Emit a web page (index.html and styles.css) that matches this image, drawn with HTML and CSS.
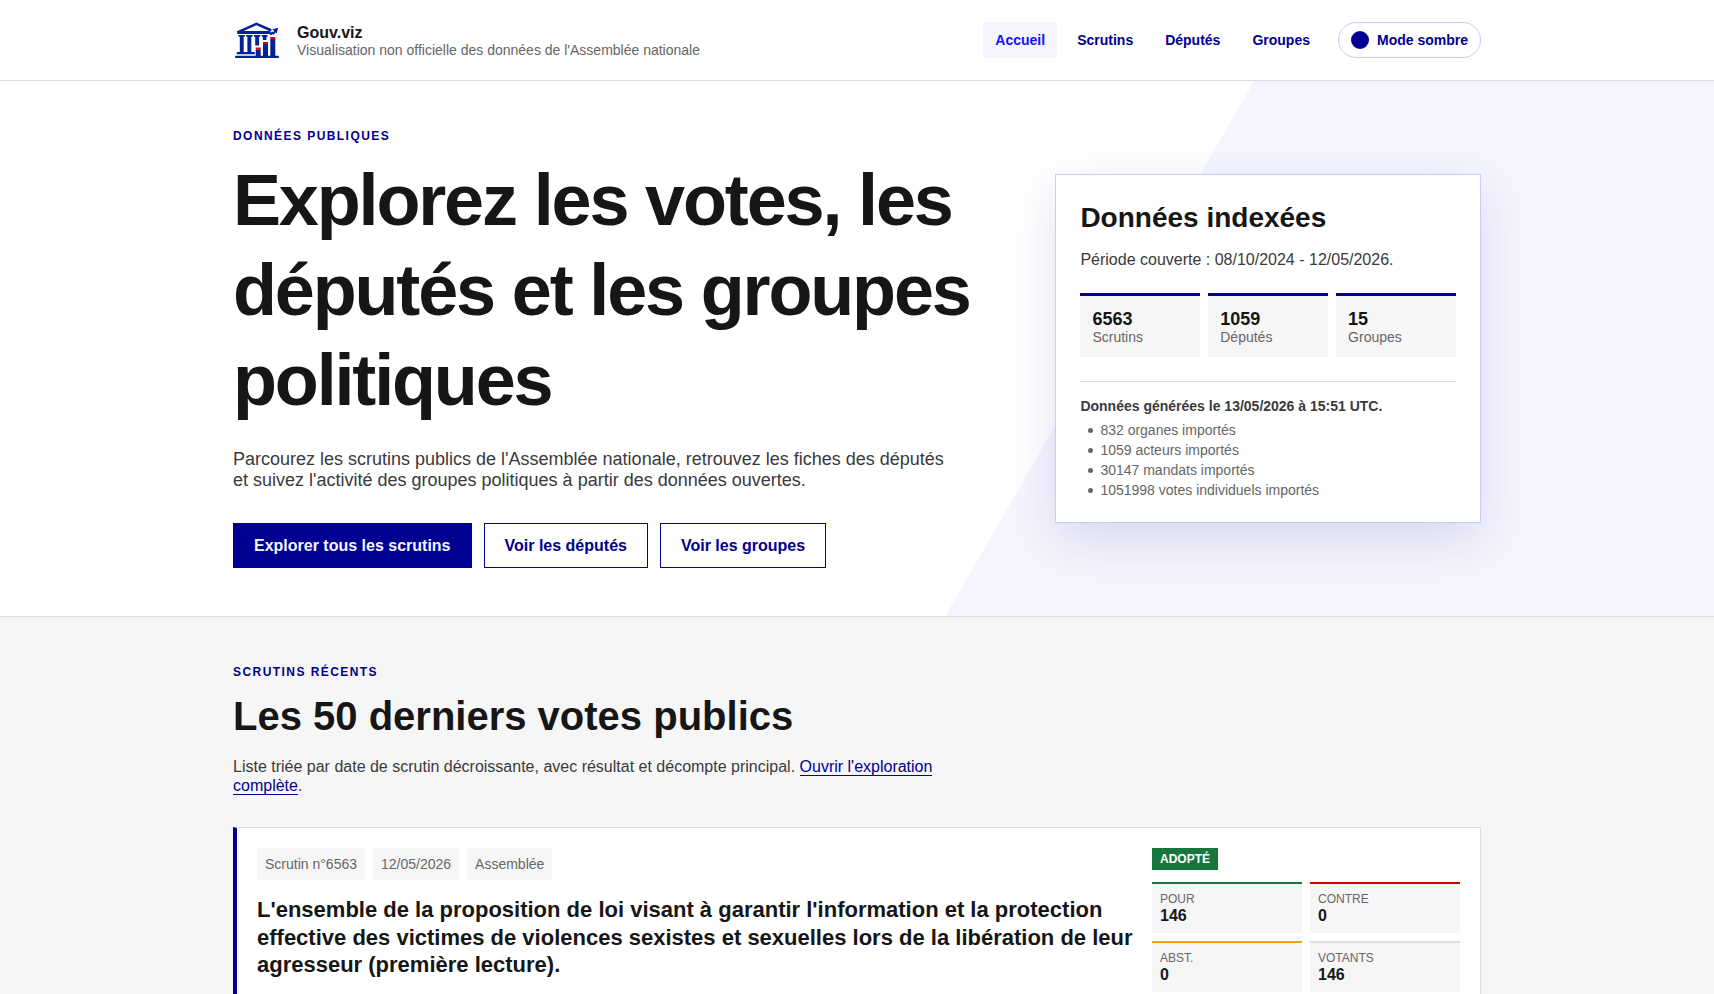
FILE: index.html
```html
<!DOCTYPE html>
<html lang="fr">
<head>
  <meta charset="UTF-8">
  <meta name="viewport" content="width=device-width, initial-scale=1.0">
  <title>Gouv.viz</title>
  <link rel="stylesheet" href="styles.css">
</head>
<body>
<header class="site-header">
  <div class="container header-inner">
    <a class="brand" href="#">
      <svg class="brand-logo" viewBox="0 0 48 48" aria-hidden="true">
        <!-- fronton -->
        <path d="M5.500 15.800L23.500 7.800l13.800 6.200" fill="none" stroke="#002395" stroke-width="2.500" stroke-linejoin="round" stroke-linecap="round"/>
        <path d="M4.300 15h31.700l2.400 1-1.800 2H4.300z" fill="#002395"/>
        <!-- colonnes -->
        <path d="M5.500 19h6.300v1.800h-1.100V36H6.800V20.800H5.500zM13.200 19h6.300v1.800h-1.200V36h-3.900V20.800h-1.200zM21 19h6.300v1.800h-1.200v8.800h-3.900v-8.800H21zM28.800 19h5.700v1.800h-1.100V24h-3.500v-3.200h-1.100zM3.800 36h18v2.200h-18z" fill="#002395"/>
        <!-- graphique -->
        <path d="M22.700 33.500h5V41h-5zM30 28h5v13h-5zM37.300 23h5v18h-5z" fill="#002395"/>
        <rect x="2" y="39.800" width="44" height="2.200" rx="1" fill="#002395"/>
        <path d="M22.700 31.600h5v2.200h-5zM30 26h5v2.200h-5zM37.300 21h5v2.200h-5z" fill="#e1000f"/>
        <path d="M37.200 18.800l2.200-2 1 .6 2.600-3" fill="none" stroke="#002395" stroke-width="2"/>
        <path d="M45 11.700l-1.300 5.800-4.200-4.200z" fill="#002395"/>
      </svg>
      <span class="brand-text">
        <strong class="brand-name">Gouv.viz</strong>
        <span class="brand-tagline">Visualisation non officielle des données de l'Assemblée nationale</span>
      </span>
    </a>
    <div class="header-actions">
      <nav class="main-nav" aria-label="Navigation principale">
        <a class="nav-link active" href="#" aria-current="page">Accueil</a>
        <a class="nav-link" href="#scrutins">Scrutins</a>
        <a class="nav-link" href="#deputes">Députés</a>
        <a class="nav-link" href="#groupes">Groupes</a>
      </nav>
      <button class="theme-toggle" type="button"><span class="theme-dot"></span>Mode sombre</button>
    </div>
  </div>
</header>

<main>
  <section class="hero">
    <div class="container hero-grid">
      <div class="hero-content">
        <p class="eyebrow">Données publiques</p>
        <h1>Explorez les votes, les députés et les groupes politiques</h1>
        <p class="hero-lead">Parcourez les scrutins publics de l'Assemblée nationale, retrouvez les fiches des députés et suivez l'activité des groupes politiques à partir des données ouvertes.</p>
        <div class="hero-buttons">
          <a class="btn btn-primary" href="#scrutins">Explorer tous les scrutins</a>
          <a class="btn" href="#deputes">Voir les députés</a>
          <a class="btn" href="#groupes">Voir les groupes</a>
        </div>
      </div>

      <aside class="data-card">
        <h2>Données indexées</h2>
        <p class="data-period">Période couverte : 08/10/2024 - 12/05/2026.</p>
        <div class="stats">
          <div class="stat"><strong>6563</strong><span>Scrutins</span></div>
          <div class="stat"><strong>1059</strong><span>Députés</span></div>
          <div class="stat"><strong>15</strong><span>Groupes</span></div>
        </div>
        <div class="data-meta">
          <p>Données générées le 13/05/2026 à 15:51 UTC.</p>
          <ul>
            <li>832 organes importés</li>
            <li>1059 acteurs importés</li>
            <li>30147 mandats importés</li>
            <li>1051998 votes individuels importés</li>
          </ul>
        </div>
      </aside>
    </div>
  </section>

  <section class="recent" id="scrutins">
    <div class="container">
      <p class="eyebrow">Scrutins récents</p>
      <h2 class="section-title">Les 50 derniers votes publics</h2>
      <p class="section-intro">Liste triée par date de scrutin décroissante, avec résultat et décompte principal. <a href="#exploration">Ouvrir l'exploration complète</a>.</p>

      <article class="vote-card">
        <div class="vote-main">
          <div class="tags">
            <span class="tag">Scrutin n°6563</span>
            <span class="tag">12/05/2026</span>
            <span class="tag">Assemblée</span>
          </div>
          <h3>L'ensemble de la proposition de loi visant à garantir l'information et la protection effective des victimes de violences sexistes et sexuelles lors de la libération de leur agresseur (première lecture).</h3>
        </div>
        <div class="vote-result">
          <span class="badge">Adopté</span>
          <dl class="counts">
            <div class="count count-pour"><dt>Pour</dt><dd>146</dd></div>
            <div class="count count-contre"><dt>Contre</dt><dd>0</dd></div>
            <div class="count count-abst"><dt>Abst.</dt><dd>0</dd></div>
            <div class="count"><dt>Votants</dt><dd>146</dd></div>
          </dl>
        </div>
      </article>
    </div>
  </section>
</main>
</body>
</html>
```

FILE: styles.css
```css
:root {
  --blue: #000091;
  --blue-active: #1212ff;
  --blue-light: #f5f5fe;
  --blue-border: #cacafb;
  --title: #161616;
  --text: #3a3a3a;
  --muted: #666;
  --grey: #f6f6f6;
  --border: #ddd;
}

* {
  box-sizing: border-box;
}
body {
  margin: 0;
  font-family: "Liberation Sans", Arial, sans-serif;
  font-size: 16px;
  color: var(--text);
  background: #fff;
}
h1, h2, h3, p, ul, dl, dd {
  margin: 0;
}
h1, h2, h3 {
  color: var(--title);
  line-height: 1.25;
}
.container {
  max-width: 1280px;
  margin: 0 auto;
  padding: 0 16px;
}

/* Header */
.site-header {
  border-bottom: 1px solid var(--border);
}
.header-inner {
  display: flex;
  align-items: center;
  justify-content: space-between;
  gap: 24px;
  min-height: 80px;
}
.brand {
  display: flex;
  align-items: center;
  gap: 16px;
  text-decoration: none;
}
.brand-logo {
  width: 48px;
  height: 48px;
  flex: none;
}
.brand-text {
  display: flex;
  flex-direction: column;
  padding-top: 2px;
}
.brand-name {
  color: var(--title);
}
.brand-tagline {
  font-size: 14px;
  color: var(--muted);
}
.header-actions {
  display: flex;
  align-items: center;
  gap: 16px;
}
.main-nav {
  display: flex;
  gap: 8px;
}
.nav-link {
  padding: 10px 12px;
  font-size: 14px;
  font-weight: bold;
  color: var(--blue);
  text-decoration: none;
}
.nav-link.active {
  color: var(--blue-active);
  background: var(--blue-light);
}
.theme-toggle {
  display: flex;
  align-items: center;
  gap: 8px;
  height: 36px;
  padding: 0 12px;
  border: 1px solid var(--blue-border);
  border-radius: 18px;
  background: #fff;
  color: var(--blue);
  font-family: inherit;
  font-size: 14px;
  font-weight: bold;
  cursor: pointer;
}
.theme-dot {
  width: 18px;
  height: 18px;
  border-radius: 50%;
  background: var(--blue);
}

/* Hero */
.hero {
  padding: 48px 0;
  border-bottom: 1px solid var(--border);
  background: linear-gradient(120deg, #fff 62%, var(--blue-light) 62%);
}
.hero-grid {
  display: grid;
  grid-template-columns: 65fr 35fr;
  align-items: center;
  gap: 32px;
}
.eyebrow {
  margin-bottom: 12px;
  font-size: 12px;
  font-weight: bold;
  letter-spacing: 0.12em;
  text-transform: uppercase;
  color: var(--blue);
}
h1 {
  font-size: 72px;
  letter-spacing: -0.03em;
}
.hero-lead {
  max-width: 720px;
  margin-top: 24px;
  font-size: 18px;
  line-height: 21px;
}
.hero-buttons {
  display: flex;
  flex-wrap: wrap;
  gap: 12px;
  margin-top: 32px;
}
.btn {
  display: inline-flex;
  align-items: center;
  min-height: 45px;
  padding: 0 20px;
  border: 1px solid var(--blue);
  background: #fff;
  color: var(--blue);
  font-weight: bold;
  text-decoration: none;
}
.btn-primary {
  background: var(--blue);
  color: #f5f5fe;
}

.data-card {
  padding: 24px;
  border: 1px solid var(--blue-border);
  background: #fff;
  box-shadow: 0 16px 48px rgba(0, 0, 145, 0.12);
}
.data-card h2 {
  font-size: 28px;
  line-height: 37px;
}
.data-period {
  margin-top: 14px;
  line-height: 19px;
}
.stats {
  display: grid;
  grid-template-columns: repeat(3, 1fr);
  gap: 8px;
  margin-top: 24px;
}
.stat {
  display: flex;
  flex-direction: column;
  padding: 12px;
  border-top: 3px solid var(--blue);
  background: var(--grey);
}
.stat strong {
  font-size: 18px;
  line-height: 22px;
  color: var(--title);
}
.stat span {
  font-size: 14px;
  line-height: 15px;
  color: var(--muted);
}
.data-meta {
  margin-top: 24px;
  padding-top: 16px;
  border-top: 1px solid var(--border);
  font-size: 14px;
}
.data-meta p {
  font-weight: bold;
}
.data-meta ul {
  display: grid;
  gap: 4px;
  margin-top: 8px;
  padding-left: 8px;
  list-style: none;
  color: var(--muted);
}
.data-meta li {
  display: flex;
  align-items: center;
  gap: 7px;
}
.data-meta li::before {
  content: "";
  width: 5px;
  height: 5px;
  border-radius: 50%;
  background: currentColor;
}

/* Scrutins */
.recent {
  padding: 48px 0;
  background: var(--grey);
}
.section-title {
  font-size: 40px;
}
.section-intro {
  max-width: 720px;
  margin: 16px 0 32px;
  line-height: 19px;
}
.section-intro a {
  color: var(--blue);
  text-decoration: none;
  border-bottom: 1px solid var(--blue);
}
.vote-card {
  display: grid;
  grid-template-columns: minmax(0, 1fr) 308px;
  gap: 16px;
  padding: 20px;
  border: 1px solid var(--border);
  border-left: 4px solid var(--blue);
  background: #fff;
}
.tags {
  display: flex;
  flex-wrap: wrap;
  gap: 8px;
  margin-bottom: 16px;
}
.tag {
  padding: 8px;
  font-size: 14px;
  color: var(--muted);
  background: var(--grey);
}
.vote-card h3 {
  font-size: 22px;
}
.vote-result {
  display: flex;
  flex-direction: column;
  align-items: flex-start;
  gap: 12px;
}
.badge {
  padding: 4px 8px;
  font-size: 12px;
  font-weight: bold;
  text-transform: uppercase;
  color: #fff;
  background: #18753c;
}
.counts {
  display: grid;
  grid-template-columns: 1fr 1fr;
  gap: 8px;
  width: 100%;
}
.count {
  padding: 8px;
  border-top: 2px solid var(--border);
  background: var(--grey);
}
.count dt {
  font-size: 12px;
  line-height: 14px;
  text-transform: uppercase;
  color: var(--muted);
}
.count dd {
  font-weight: bold;
  line-height: 19px;
  color: var(--title);
}
.count-pour {
  border-top-color: #18753c;
}
.count-contre {
  border-top-color: #ce0000;
}
.count-abst {
  border-top-color: #efa711;
}

@media (max-width: 1100px) {
  .header-inner, .header-actions {
    flex-wrap: wrap;
  }
  .hero-grid, .vote-card {
    grid-template-columns: minmax(0, 1fr);
  }
  h1 {
    font-size: 48px;
  }
}
```
